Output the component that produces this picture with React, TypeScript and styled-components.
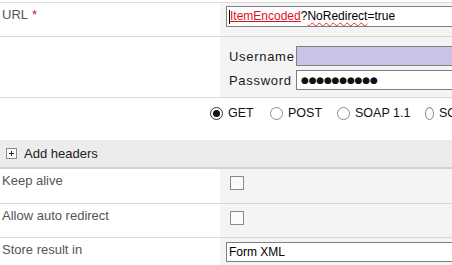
import React from "react";
import styled, { createGlobalStyle } from "styled-components";

const GlobalStyle = createGlobalStyle`
  html, body { margin: 0; padding: 0; background: #ffffff; overflow: hidden; }
  body { font-family: "Liberation Sans", Arial, sans-serif; }
`;

const Page = styled.div`
  width: 452px;
  height: 265px;
  overflow: hidden;
  padding-top: 2px;
  box-sizing: border-box;
`;

const TopRule = styled.div`
  height: 1px;
  background: #dcdcdc;
`;

const Row = styled.div<{ $h: number; $line?: boolean }>`
  display: grid;
  grid-template-columns: 220px 232px;
  height: ${(p) => p.$h}px;
  border-bottom: ${(p) => (p.$line ? "1px solid #d9d9d9" : "none")};
`;

const Label = styled.div`
  padding: 4px 0 0 2px;
  font-size: 13px;
  line-height: 15px;
  color: #555555;
  background: #ffffff;
`;

const Req = styled.span`
  color: #d02030;
  margin-left: 4px;
`;

const Value = styled.div<{ $pt: number; $pl: number }>`
  background: #f4f4f4;
  padding: ${(p) => p.$pt}px 0 0 ${(p) => p.$pl}px;
  overflow: hidden;
`;

const Field = styled.div<{ $h: number; $fill?: string }>`
  box-sizing: border-box;
  width: 260px;
  height: ${(p) => p.$h}px;
  border: 1px solid #7f7f7f;
  background: ${(p) => p.$fill || "#ffffff"};
  font-size: 12px;
  line-height: ${(p) => p.$h - 2}px;
  padding-left: 2px;
  color: #000000;
  white-space: nowrap;
  display: flex;
  align-items: center;
`;

const Caret = styled.span`
  display: inline-block;
  width: 1px;
  height: 14px;
  background: #000;
`;

const Missing = styled.span`
  color: #e0101a;
  text-decoration: underline;
  text-decoration-color: #e0101a;
`;

const Misspelled = styled.span`
  text-decoration: underline wavy #e03030;
  text-decoration-thickness: 1px;
  text-underline-offset: 2px;
`;

const Creds = styled.div`
  display: grid;
  grid-template-columns: 70px 200px;
  row-gap: 4px;
  align-items: center;
`;

const CredLabel = styled.div`
  font-size: 13px;
  letter-spacing: 0.7px;
  color: #1a1a1a;
  padding-left: 3px;
`;

const Dots = styled.span`
  font-size: 9px;
  letter-spacing: -0.2px;
  padding-left: 2px;
  color: #111;
  font-family: "DejaVu Sans", sans-serif;
`;

const RadioRow = styled.div`
  height: 42px;
  display: flex;
  align-items: flex-start;
  padding: 8px 0 0 210px;
  box-sizing: border-box;
  background: #ffffff;
  white-space: nowrap;
  overflow: hidden;
`;

const RadioOpt = styled.label<{ $w: number }>`
  display: flex;
  align-items: center;
  width: ${(p) => p.$w}px;
  flex: none;
  font-size: 12.5px;
  color: #111;
`;

const RadioDot = styled.span<{ $on?: boolean }>`
  box-sizing: border-box;
  width: 13px;
  height: 13px;
  border-radius: 50%;
  border: 1px solid ${(p) => (p.$on ? "#333" : "#8a8a8a")};
  background: #fff;
  margin-right: 5px;
  display: flex;
  align-items: center;
  justify-content: center;
  &::after {
    content: "";
    width: 7px;
    height: 7px;
    border-radius: 50%;
    background: ${(p) => (p.$on ? "#111" : "transparent")};
  }
`;

const HeaderBar = styled.div`
  height: 27px;
  background: #ececec;
  border-bottom: 2px solid #d2d2d2;
  display: flex;
  align-items: center;
  padding-left: 6px;
  font-size: 13px;
  color: #222;
`;

const PlusBox = styled.span`
  box-sizing: border-box;
  width: 11px;
  height: 11px;
  border: 1px solid #8a8a8a;
  background: #fafafa;
  position: relative;
  margin-right: 7px;
  &::before,
  &::after {
    content: "";
    position: absolute;
    background: #222;
  }
  &::before { left: 2px; top: 4px; width: 5px; height: 1px; }
  &::after { left: 4px; top: 2px; width: 1px; height: 5px; }
`;

const Check = styled.span`
  display: block;
  box-sizing: border-box;
  width: 14px;
  height: 14px;
  border: 1px solid #8a8a8a;
  background: #fbfbfb;
`;

export default function App() {
  return (
    <>
      <GlobalStyle />
      <Page>
        <TopRule />
        <Row $h={33} $line>
          <Label>
            URL<Req>*</Req>
          </Label>
          <Value $pt={3} $pl={6}>
            <Field $h={21}>
              <Caret />
              <Missing>ItemEncoded</Missing>?<Misspelled>NoRedirect</Misspelled>=true
            </Field>
          </Value>
        </Row>
        <Row $h={60} $line>
          <Label />
          <Value $pt={9} $pl={6}>
            <Creds>
              <CredLabel>Username</CredLabel>
              <Field $h={20} $fill="#c9c3e6" />
              <CredLabel>Password</CredLabel>
              <Field $h={20}>
                <Dots>●●●●●●●●●●</Dots>
              </Field>
            </Creds>
          </Value>
        </Row>
        <RadioRow>
          <RadioOpt $w={60}>
            <RadioDot $on />
            GET
          </RadioOpt>
          <RadioOpt $w={67}>
            <RadioDot />
            POST
          </RadioOpt>
          <RadioOpt $w={88}>
            <RadioDot />
            SOAP 1.1
          </RadioOpt>
          <RadioOpt $w={60}>
            <RadioDot />
            SOAP 1.2
          </RadioOpt>
        </RadioRow>
        <HeaderBar>
          <PlusBox />
          Add headers
        </HeaderBar>
        <Row $h={34} $line>
          <Label>Keep alive</Label>
          <Value $pt={7} $pl={10}>
            <Check />
          </Value>
        </Row>
        <Row $h={33} $line>
          <Label>Allow auto redirect</Label>
          <Value $pt={7} $pl={10}>
            <Check />
          </Value>
        </Row>
        <Row $h={30}>
          <Label>Store result in</Label>
          <Value $pt={4} $pl={6}>
            <Field $h={20}>Form XML</Field>
          </Value>
        </Row>
      </Page>
    </>
  );
}
